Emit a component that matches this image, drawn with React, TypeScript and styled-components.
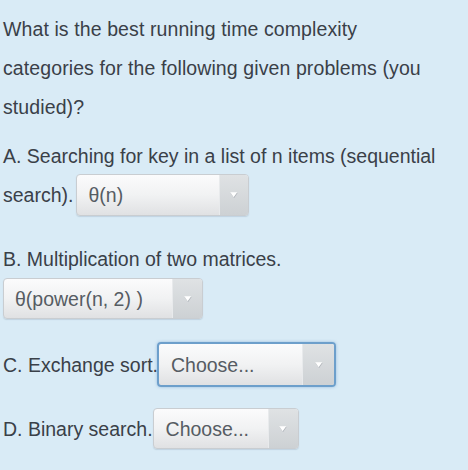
import React from "react";
import styled, { createGlobalStyle, css } from "styled-components";

const Global = createGlobalStyle`
  html, body { margin: 0; padding: 0; background: #d9ebf6; }
  body { font-family: "Liberation Sans", Arial, Helvetica, sans-serif; }
`;

const Page = styled.div`
  width: 468px;
  height: 470px;
  box-sizing: border-box;
  padding: 10px 0 0 3px;
  background: #d9ebf6;
  color: #3a4048;
  font-size: 19.5px;
  display: flex;
  flex-direction: column;
  overflow: hidden;
`;

const Question = styled.p`
  margin: 0;
  line-height: 39px;
  letter-spacing: 0.1px;
`;

const Line = styled.div<{ $mt?: number }>`
  line-height: 36px;
  margin-top: ${(p) => p.$mt ?? 0}px;
  white-space: nowrap;
`;

const Row = styled.div<{ $mt?: number }>`
  display: flex;
  align-items: center;
  margin-top: ${(p) => p.$mt ?? 0}px;
  line-height: 36px;
  white-space: nowrap;
`;

const Label = styled.span<{ $gap: number }>`
  margin-right: ${(p) => p.$gap}px;
`;

const SelectBox = styled.div<{ $w: number; $h: number; $focus?: boolean }>`
  box-sizing: border-box;
  width: ${(p) => p.$w}px;
  height: ${(p) => p.$h}px;
  flex-shrink: 0;
  display: flex;
  align-items: stretch;
  border-radius: 4px;
  border: 1px solid #c9cdd1;
  background: linear-gradient(#fbfbfc 0%, #f1f2f3 50%, #e0e1e3 100%);
  box-shadow: 0 1px 1px rgba(120, 140, 160, 0.25);
  overflow: hidden;
  ${(p) =>
    p.$focus &&
    css`
      border: 2px solid #6d9fcb;
      box-shadow: 0 0 3px rgba(80, 140, 200, 0.5);
    `}
`;

const SelectText = styled.span<{ $pl: number }>`
  flex: 1;
  display: flex;
  align-items: center;
  padding-left: ${(p) => p.$pl}px;
  color: #565c63;
  font-size: 19.5px;
`;

const ArrowArea = styled.span<{ $w: number }>`
  width: ${(p) => p.$w}px;
  display: flex;
  align-items: center;
  justify-content: center;
  background: linear-gradient(#dfe2e4, #cdd1d4);
  border-left: 1px solid #e8eaec;
`;

const Arrow = styled.svg`
  width: 10px;
  height: 8px;
`;

type SelProps = {
  value: string;
  w: number;
  h: number;
  aw: number;
  pl?: number;
  focus?: boolean;
};

function Select({ value, w, h, aw, pl = 11, focus }: SelProps) {
  return (
    <SelectBox $w={w} $h={h} $focus={focus}>
      <SelectText $pl={pl}>{value}</SelectText>
      <ArrowArea $w={aw}>
        <Arrow viewBox="0 0 10 8">
          <path d="M1.6 2 L8.6 2 L5.1 7 Z" fill="#aeb3b8" />
          <path d="M1.2 1.2 L8.2 1.2 L4.7 6.2 Z" fill="#ffffff" />
        </Arrow>
      </ArrowArea>
    </SelectBox>
  );
}

export default function App() {
  return (
    <>
      <Global />
      <Page>
        <Question>
          What is the best running time complexity
          <br />
          categories for the following given problems (you
          <br />
          studied)?
        </Question>
        <Line $mt={11}>A. Searching for key in a list of n items (sequential</Line>
        <Row>
          <Label $gap={3}>search).</Label>
          <Select value="θ(n)" w={173} h={42} aw={28} />
        </Row>
        <Line $mt={25}>B. Multiplication of two matrices.</Line>
        <Row $mt={1}>
          <Select value="θ(power(n, 2) )" w={200} h={41} aw={29} />
        </Row>
        <Row $mt={23}>
          <Label $gap={-1}>C. Exchange sort.</Label>
          <Select value="Choose..." w={179} h={45} aw={31} pl={12} focus />
        </Row>
        <Row $mt={21}>
          <Label $gap={0}>D. Binary search.</Label>
          <Select value="Choose..." w={146} h={41} aw={29} pl={12} />
        </Row>
      </Page>
    </>
  );
}
